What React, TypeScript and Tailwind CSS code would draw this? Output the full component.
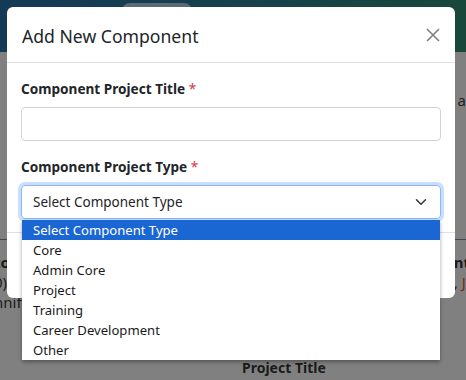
import React from "react";

const items = ["Select Component Type", "Core", "Admin Core", "Project", "Training", "Career Development", "Other"];

export default function App() {
  return (
    <div className="relative w-[466px] h-[380px] overflow-hidden bg-[#808080] font-['Noto_Sans',sans-serif]">
      {/* background page (dimmed) */}
      <div className="flex flex-col">
        <div className="h-[52px] bg-gradient-to-r from-[#143a55] via-[#17404d] to-[#19473a] relative">
          <div className="ml-[122px] mt-[3px] w-[70px] h-[14px] rounded-t-[8px] bg-[#5b6a74]" />
        </div>
        <div className="flex justify-end h-[188px] pt-[38px] border-b border-[#3e4a55]">
          <span className="text-[15px] text-[#222] mr-[-6px] leading-[20px]">ar</span>
        </div>
        <div className="flex justify-between pt-[12px] text-[15px] leading-[20px] text-[#1a1a1a]">
          <div className="flex flex-col ml-[-6px]">
            <span className="font-bold">to</span>
            <span>0)</span>
            <span>nnife</span>
            <span>.</span>
          </div>
          <div className="flex flex-col mr-[-4px]">
            <span className="font-bold">nt</span>
            <span>, <span className="text-[#7a2a10]">J</span></span>
          </div>
        </div>
        <div className="pl-[242px] pt-[26px] text-[14px] font-bold text-[#1a1a1a] leading-[20px]">Project Title</div>
      </div>

      {/* modal */}
      <div className="absolute left-[7px] top-[7px] w-[448px] h-[291px] bg-white rounded-[6px] flex flex-col">
        <div className="h-[56px] flex items-center justify-between pl-[15px] pr-[14px] border-b border-[#dee2e6]">
          <span className="text-[17.6px] text-[#212529] leading-[24px] pt-[2px]">Add New Component</span>
          <svg width="16" height="16" viewBox="0 0 16 16" className="text-[#808080]">
            <path d="M2 2 L14 14 M14 2 L2 14" stroke="currentColor" strokeWidth="1.6" />
          </svg>
        </div>
        <div className="flex flex-col px-[14px] pt-[16px] h-[170px] border-b border-[#dee2e6]">
          <label className="text-[13.6px] font-bold text-[#212529] leading-[20px]">
            Component Project Title <span className="text-[#dc3545] font-normal">*</span>
          </label>
          <div className="mt-[8px] h-[34px] rounded-[4px] border border-[#ced4da]" />
          <label className="mt-[16px] text-[13.6px] font-bold text-[#212529] leading-[20px]">
            Component Project Type <span className="text-[#dc3545] font-normal">*</span>
          </label>
          <div className="mt-[8px] h-[34px] rounded-[4px] border border-[#86b7fe] shadow-[0_0_0_3px_rgba(13,110,253,0.22)] flex items-center justify-between pl-[11px] pr-[13px]">
            <span className="text-[13.5px] text-[#212529]">Select Component Type</span>
            <svg width="12" height="12" viewBox="0 0 16 16">
              <path d="M2 5 L8 11 L14 5" fill="none" stroke="#343a40" strokeWidth="2" strokeLinecap="round" strokeLinejoin="round" />
            </svg>
          </div>
        </div>
      </div>

      {/* open dropdown list */}
      <div className="absolute left-[22px] top-[220px] w-[418px] bg-white shadow-[0_2px_4px_rgba(0,0,0,0.35)] flex flex-col">
        {items.map((it, i) => (
          <div
            key={it}
            className={
              "h-[20px] pl-[11px] text-[13.1px] leading-[20px] " +
              (i === 0 ? "bg-[#1a66d2] text-white" : "text-[#1a1a1a]")
            }
          >
            {it}
          </div>
        ))}
      </div>
    </div>
  );
}
